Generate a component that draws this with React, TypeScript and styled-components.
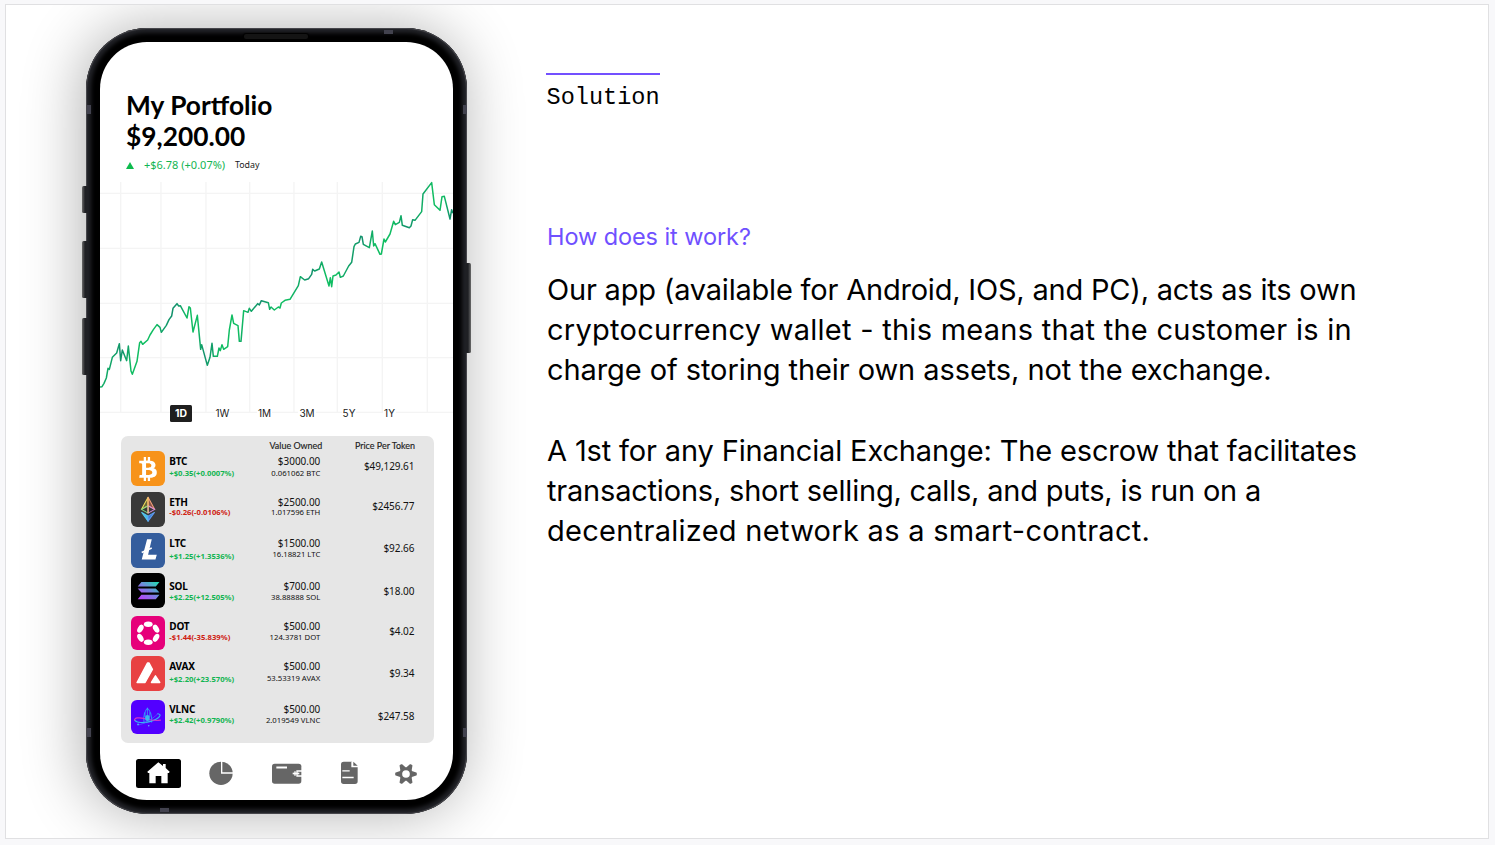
import React from 'react';
import styled, { createGlobalStyle } from 'styled-components';
import { FaBtc } from 'react-icons/fa';

const GlobalStyle = createGlobalStyle`
  *, *::before, *::after { box-sizing: border-box; }
  body { margin: 0; background: #f8f8fa; overflow: hidden; }
`;

const Page = styled.main`
  height: 845px;
  padding: 4px 6px 6px 5px;
`;

const Slide = styled.section`
  display: flex;
  align-items: flex-start;
  height: 835px;
  border: 1px solid #e0e0e2;
  background: #fff;
  overflow: hidden;
`;

/* ---------- phone ---------- */

const PhoneCase = styled.div`
  position: relative;
  flex: none;
  width: 381px;
  height: 786px;
  margin: 23px 0 0 80px;
  padding: 14px;
  border-radius: 61px;
  background: #000;
  box-shadow:
    inset 0 0 1px 1px #4b4b50,
    inset 0 0 4px 5px #222328,
    -4px 0 60px rgba(0, 0, 0, 0.31);
`;

const SideButton = styled.span<{ $side: 'left' | 'right'; $top: number; $length: number }>`
  position: absolute;
  ${(p) => p.$side}: ${(p) => (p.$side === 'left' ? -4.5 : -4)}px;
  top: ${(p) => p.$top}px;
  width: 6px;
  height: ${(p) => p.$length}px;
  border-radius: 1.5px;
  background: linear-gradient(to ${(p) => (p.$side === 'left' ? 'right' : 'left')}, #6b6b6b, #1f2024 50%);
`;

const Antenna = styled.span<{ $x: number; $y: number; $flat?: boolean }>`
  position: absolute;
  left: ${(p) => p.$x}px;
  top: ${(p) => p.$y}px;
  width: ${(p) => (p.$flat ? 9 : 4)}px;
  height: ${(p) => (p.$flat ? 4 : 9)}px;
  background: #42424e;
`;

const Speaker = styled.span`
  position: absolute;
  left: 158px;
  top: 6px;
  width: 64px;
  height: 5px;
  border-radius: 2px;
  background: #141414;
  box-shadow: 0 0 1px 1px #000;
`;

const Screen = styled.div`
  display: flex;
  flex-direction: column;
  width: 353px;
  height: 758px;
  padding-top: 47.5px;
  border-radius: 47px;
  background: #fff;
  overflow: hidden;
  font-family: 'Noto Sans', sans-serif;
`;

const Title = styled.h1`
  margin: 0;
  padding-left: 26px;
  font: 700 26.3px/31.4px Lato, sans-serif;
  color: #000;
`;

const ChangeRow = styled.div`
  display: flex;
  align-items: center;
  height: 12px;
  margin-top: 7px;
  padding-left: 26.3px;
`;

const UpArrow = styled.span`
  width: 0;
  height: 0;
  margin-top: 1px;
  border: 4px solid transparent;
  border-top: 0;
  border-bottom: 7px solid #0dbb4d;
`;

const ChangeText = styled.span`
  width: 91px;
  margin-left: 9.7px;
  font-size: 11px;
  line-height: 12px;
  white-space: nowrap;
  color: #12b552;
`;

const Today = styled.span`
  font-size: 8.82px;
  line-height: 12px;
  color: #1a1a1a;
`;

const ChartSvg = styled.svg`
  display: block;
  flex: none;
  width: 353px;
  height: 233px;
  margin-top: 8.7px;
`;

const Tabs = styled.div`
  position: relative;
  display: grid;
  flex: none;
  grid-template-columns: 42px 41px 43px 42px 42px 39px;
  justify-items: center;
  height: 17px;
  margin: -8px 0 0 60px;
`;

const Tab = styled.button<{ $active?: boolean }>`
  width: ${(p) => (p.$active ? '22px' : 'auto')};
  height: 17px;
  padding: 0 1px;
  border: 0;
  border-radius: 1.5px;
  background: ${(p) => (p.$active ? '#1f1f1f' : '#fff')};
  color: ${(p) => (p.$active ? '#fff' : '#222')};
  font: ${(p) => (p.$active ? '700 10.4px/17px' : '400 10px/17px')} Inter, sans-serif;
`;

/* ---------- token list ---------- */

const TokenCard = styled.div`
  flex: none;
  width: 313.2px;
  height: 307.7px;
  margin: 13.5px 0 0 21.3px;
  padding: 5.5px 20.2px 0 9.7px;
  border-radius: 7px;
  background: #e6e6e6;
`;

const TokenHeader = styled.div`
  display: flex;
  justify-content: flex-end;
  height: 10.4px;
  margin-right: -0.7px;
  font: 400 8.95px/10px Lato, sans-serif;
  color: #222;
  -webkit-text-stroke: 0.15px #222;
`;

const HeaderCell = styled.span`
  min-width: 92.7px;
  text-align: right;
`;

const TokenRow = styled.div<{ $height: number }>`
  display: grid;
  grid-template-columns: 34.5px 79.5px 75.3px 1fr;
  height: ${(p) => p.$height}px;
`;

const Badge = styled.div<{ $bg: string }>`
  display: flex;
  align-items: center;
  justify-content: center;
  height: 34.5px;
  border-radius: 6px;
  background: ${(p) => p.$bg};
  color: #fff;

  svg { display: block; }
`;

const Stack = styled.div<{ $top: number; $gap: number; $right?: boolean }>`
  display: flex;
  flex-direction: column;
  align-items: ${(p) => (p.$right ? 'flex-end' : 'flex-start')};
  gap: ${(p) => p.$gap}px;
  padding: ${(p) => p.$top}px 0 0 ${(p) => (p.$right ? 0 : 3.8)}px;
  white-space: nowrap;
`;

const Symbol = styled.span`
  font-size: 10px;
  font-weight: 700;
  line-height: 10px;
  letter-spacing: -0.2px;
  color: #000;
`;

const Delta = styled.span<{ $down?: boolean }>`
  font-size: 7.7px;
  font-weight: 700;
  line-height: 10px;
  color: ${(p) => (p.$down ? '#cf2213' : '#12b552')};
`;

const Amount = styled.span`
  font-size: 9.95px;
  line-height: 10px;
  color: #111;
`;

const Units = styled.span`
  font-size: 7.72px;
  line-height: 10px;
  color: #111;
`;

const Price = styled.span`
  font-size: 10px;
  line-height: 10px;
  letter-spacing: -0.08px;
  color: #111;
`;

/* ---------- bottom navigation ---------- */

const Nav = styled.nav`
  display: grid;
  flex: none;
  grid-template-columns: 73px 63px 69px 54px 22px;
  align-items: center;
  height: 29px;
  margin: 15.5px 0 0 36px;
`;

const HomeButton = styled.div`
  display: flex;
  align-items: center;
  justify-content: center;
  width: 44.7px;
  height: 29px;
  border-radius: 2.5px;
  background: #000;
`;

const NavIcon = styled.svg`
  display: block;
`;

/* ---------- copy ---------- */

const Copy = styled.div`
  display: flex;
  flex-direction: column;
  align-items: flex-start;
  margin-left: 79px;
  padding-top: 68.3px;
`;

const Eyebrow = styled.div`
  width: 114px;
  height: 39.1px;
  border-top: 2px solid #7350ff;
  padding: 9.1px 0 0 0.6px;
  font: 400 23.54px/28px 'Liberation Mono', monospace;
  white-space: nowrap;
  color: #000;
`;

const Question = styled.h2`
  margin: 109.5px 0 0 1px;
  font: 400 23.5px/30px Inter, sans-serif;
  letter-spacing: -0.08px;
  color: #6f50ff;
`;

const Paragraph = styled.p`
  margin: 18.4px 0 40.1px 1px;
  font: 400 29px/40.1px Inter, sans-serif;
  color: #000;

  & + & { margin-top: 0; }
`;

const Line = styled.span<{ $tracking: number }>`
  display: block;
  white-space: nowrap;
  letter-spacing: ${(p) => p.$tracking}px;
`;

/* ---------- token logos, all on a 103-unit square ---------- */

const Logo = ({ children }: { children: React.ReactNode }) => (
  <svg width="34.5" height="34.5" viewBox="0 0 103 103" fill="none">{children}</svg>
);

const EthLogo = () => (
  <Logo>
    <g strokeWidth="3" strokeLinejoin="round" strokeLinecap="round">
      <path d="M51 16 31 52 51 41Z" fill="#6b6438" stroke="#f3e05a" />
      <path d="M51 16 71 52 51 41Z" fill="#8a5548" stroke="#f7a27c" />
      <path d="M31 52 51 41V63Z" stroke="#7fd67e" />
      <path d="M71 52 51 41V63Z" stroke="#d38ae0" />
      <path d="M32 61 51 72V87Z" fill="#49b8e8" stroke="#56c8f0" />
      <path d="M70 61 51 72V87Z" fill="#3f7fd8" stroke="#5f9cf0" />
      <path d="M51 17V62" stroke="#f6c26a" />
    </g>
  </Logo>
);

const LtcLogo = () => (
  <Logo>
    <path d="M48 19H62L51 65H77L73 79H32Z" fill="#fff" />
    <path d="M32 58 62 45" stroke="#fff" strokeWidth="5" />
  </Logo>
);

const SolLogo = () => (
  <Logo>
    <defs>
      <linearGradient id="sol" gradientUnits="userSpaceOnUse" x1="28" y1="84" x2="76" y2="22">
        <stop offset="0" stopColor="#c13bff" />
        <stop offset="0.5" stopColor="#7a7fe0" />
        <stop offset="1" stopColor="#1fe0b0" />
      </linearGradient>
    </defs>
    <path fill="url(#sol)" d="M31 27H85L74 40H20ZM20 46H74L85 58.500H31ZM31 65H85L74 78H20Z" />
  </Logo>
);

const DotLogo = () => (
  <Logo>
    {[0, 60, 120, 180, 240, 300].map((a) => (
      <ellipse key={a} cx="51.500" cy="24.500" rx="13" ry="8" fill="#fff" transform={`rotate(${a} 51.5 51.500)`} />
    ))}
  </Logo>
);

const AvaxLogo = () => (
  <Logo>
    <g fill="#fff" stroke="#fff" strokeWidth="4" strokeLinejoin="round">
      <path d="M18 79 49 21H54L64 40 42 79Z" />
      <path d="M73 59 86 79H61Z" />
    </g>
  </Logo>
);

const VlncLogo = () => (
  <Logo>
    <g strokeLinecap="round">
      <path d="M39 68C35 48 42 31 49 25C57 31 64 48 61 66" stroke="#2f8dff" strokeWidth="3" />
      <path d="M49 24V44M42 38V50M56 38V50" stroke="#3fb4f5" strokeWidth="2" />
      <path d="M80 41C94 42 86 56 58 64C38 70 16 68 11 60" stroke="#35b6f2" strokeWidth="3.500" />
      <path d="M11 60C9 53 24 51 42 56C58 60 74 63 88 60" stroke="#d433c8" strokeWidth="3.500" />
      <path d="M24 74C36 72 62 60 80 41" stroke="#4a6dff" strokeWidth="2" />
      <ellipse cx="49" cy="54" rx="7" ry="9" fill="#39b9ee" />
      <circle cx="21" cy="73" r="2.500" fill="#4fd0f5" />
      <circle cx="53" cy="77" r="2" fill="#4fd0f5" />
    </g>
  </Logo>
);

type Token = {
  symbol: string;
  delta: string;
  amount: string;
  units: string;
  price: string;
  bg: string;
  logo: React.ReactNode;
  height: number;
  top: number;
  deltaGap: number;
  unitsGap: number;
  priceTop: number;
};

const tokens: Token[] = [
  { symbol: 'BTC', delta: '+$0.35(+0.0007%)', amount: '$3000.00', units: '0.061062 BTC', price: '$49,129.61', bg: '#f7931a', logo: <FaBtc size={24} />, height: 41, top: 4.9, deltaGap: 1.5, unitsGap: 1.5, priceTop: 9.4 },
  { symbol: 'ETH', delta: '-$0.26(-0.0106%)', amount: '$2500.00', units: '1.017596 ETH', price: '$2456.77', bg: '#393939', logo: <EthLogo />, height: 40.7, top: 4.7, deltaGap: 0.4, unitsGap: 0.4, priceTop: 8.7 },
  { symbol: 'LTC', delta: '+$1.25(+1.3536%)', amount: '$1500.00', units: '16.18821 LTC', price: '$92.66', bg: '#345d9d', logo: <LtcLogo />, height: 40.3, top: 4.9, deltaGap: 3, unitsGap: 1, priceTop: 9.7 },
  { symbol: 'SOL', delta: '+$2.25(+12.505%)', amount: '$700.00', units: '38.88888 SOL', price: '$18.00', bg: '#000', logo: <SolLogo />, height: 42.5, top: 7.6, deltaGap: 1.1, unitsGap: 1, priceTop: 12.3 },
  { symbol: 'DOT', delta: '-$1.44(-35.839%)', amount: '$500.00', units: '124.3781 DOT', price: '$4.02', bg: '#e6007a', logo: <DotLogo />, height: 40.5, top: 5.1, deltaGap: 1.2, unitsGap: 1.2, priceTop: 10.1 },
  { symbol: 'AVAX', delta: '+$2.20(+23.570%)', amount: '$500.00', units: '53.53319 AVAX', price: '$9.34', bg: '#e84142', logo: <AvaxLogo />, height: 43.5, top: 4.9, deltaGap: 2.7, unitsGap: 1.5, priceTop: 11.7 },
  { symbol: 'VLNC', delta: '+$2.42(+0.9790%)', amount: '$500.00', units: '2.019549 VLNC', price: '$247.58', bg: '#5200ff', logo: <VlncLogo />, height: 34.5, top: 4.4, deltaGap: 1.1, unitsGap: 1.1, priceTop: 10.8 },
];

/* ---------- price history ---------- */

const history =
  '0,621 6,620 12,610 19,594 24,565 28,568 37,532 50,519 58,491 62,542 67,510 80,542 85,498 93,573 97,583 111,544 119,488 123,484 128,493 143,480 150,465 160,449 171,434 180,442 184,457 199,436 207,419 215,408 219,385 231,371 236,378 241,377 261,414 267,380 271,384 279,456 292,406 302,508 305,494 322,556 330,532 336,490 340,529 352,529 357,504 361,512 366,494 371,508 383,500 388,450 396,405 401,430 414,437 418,484 423,484 431,392 444,397 448,385 454,394 473,371 478,375 484,362 505,368 509,388 513,381 523,390 535,381 540,384 544,369 555,361 570,358 595,317 601,290 614,300 626,296 635,283 638,268 644,273 658,267 665,246 687,318 691,293 695,320 699,288 708,285 717,276 721,292 730,288 746,258 755,247 762,200 766,192 777,187 782,169 786,170 790,193 808,203 817,153 821,198 825,191 840,223 844,222 852,177 856,186 870,162 881,124 886,134 898,127 903,107 907,136 928,143 933,138 938,119 945,121 965,95 969,42 995,8 1003,74 1020,91 1026,50 1033,49 1050,117 1055,89 1059,100';

const gridX = [62, 183, 318, 449, 582, 712, 847, 982];
const gridY = [40, 205, 370, 533, 697];

const Chart = () => (
  <ChartSvg viewBox="0 0 1059 699">
    <defs>
      <linearGradient id="trend" gradientUnits="userSpaceOnUse" x1="0" y1="0" x2="60" y2="15" spreadMethod="reflect">
        <stop offset="0.3" stopColor="#10bd62" />
        <stop offset="1" stopColor="#128f6c" />
      </linearGradient>
    </defs>
    <g stroke="#f4f4f4" strokeWidth="4">
      {gridX.map((x) => <path key={x} d={`M${x} 6V699`} />)}
      {gridY.map((y) => <path key={y} d={`M0 ${y}H1059`} />)}
    </g>
    <polyline points={history} fill="none" stroke="url(#trend)" strokeWidth="4.500" strokeLinejoin="round" />
  </ChartSvg>
);

const tabs = ['1D', '1W', '1M', '3M', '5Y', '1Y'];

/* Six tapered teeth round the hub, two outer and two inner corners each. */
const gearPoints = [0, 60, 120, 180, 240, 300]
  .flatMap((tooth) => [[-23, 18], [-4, 30], [4, 30], [23, 18]].map(([turn, r]) => {
    const a = ((tooth + turn) * Math.PI) / 180;
    return `${(33 + r * Math.cos(a)).toFixed(1)},${(33 + r * Math.sin(a)).toFixed(1)}`;
  }))
  .join(' ');

const BottomNav = () => (
  <Nav>
    <HomeButton>
      <NavIcon width="23" height="22" viewBox="0 0 69 66" fill="#fff">
        <path d="M34 1 48 12V6H56V18L68 29 66 33H62V64H43V42H26V64H7V33H3L1 29Z" />
      </NavIcon>
    </HomeButton>
    <NavIcon width="24" height="24" viewBox="0 0 72 72">
      <circle cx="36" cy="37" r="35" fill="#666" />
      <path d="M38 0V36H72" fill="none" stroke="#fff" strokeWidth="4" />
    </NavIcon>
    <NavIcon width="30" height="22" viewBox="0 0 90 66">
      <rect x="0" y="5" width="88" height="60" rx="8" fill="#666" />
      <path d="M13 16.500H45" stroke="#fff" strokeWidth="6" />
      <path d="M90 27H75V42H90" fill="none" stroke="#fff" strokeWidth="4" />
      <path d="M62 34.500H82" stroke="#fff" strokeWidth="5" />
      <path d="M69 28V41" stroke="#fff" strokeWidth="4" />
    </NavIcon>
    <NavIcon width="18" height="24" viewBox="0 0 54 72">
      <path d="M8 2H33V18H50V61Q50 69 42 69H8Q0 69 0 61V10Q0 2 8 2Z" fill="#666" />
      <path d="M37 2 50 14H37Z" fill="#666" />
      <path d="M33 2V17H51" fill="none" stroke="#fff" strokeWidth="4" />
      <path d="M4 29.500H26M4 49.500H38" stroke="#fff" strokeWidth="4" />
    </NavIcon>
    <NavIcon width="22" height="23" viewBox="0 -3 66 69">
      <polygon points={gearPoints} fill="#666" stroke="#666" strokeWidth="5" strokeLinejoin="round" />
      <circle cx="33" cy="33" r="11.500" fill="#fff" />
    </NavIcon>
  </Nav>
);

export default function App() {
  return (
    <Page>
      <GlobalStyle />
      <Slide>
        <PhoneCase>
          <SideButton $side="left" $top={158} $length={27} />
          <SideButton $side="left" $top={213} $length={57} />
          <SideButton $side="left" $top={290} $length={57} />
          <SideButton $side="right" $top={235} $length={90} />
          <Antenna $x={298} $y={1.5} $flat />
          <Antenna $x={74} $y={780} $flat />
          <Antenna $x={0.5} $y={77} />
          <Antenna $x={376.5} $y={77} />
          <Antenna $x={0.5} $y={700} />
          <Antenna $x={376.5} $y={700} />
          <Speaker />
          <Screen>
            <Title>My Portfolio<br />$9,200.00</Title>
            <ChangeRow>
              <UpArrow />
              <ChangeText>+$6.78 (+0.07%)</ChangeText>
              <Today>Today</Today>
            </ChangeRow>
            <Chart />
            <Tabs>
              {tabs.map((t, i) => <Tab key={t} $active={i === 0}>{t}</Tab>)}
            </Tabs>
            <TokenCard>
              <TokenHeader>
                <HeaderCell>Value Owned</HeaderCell>
                <HeaderCell>Price Per Token</HeaderCell>
              </TokenHeader>
              {tokens.map((t) => (
                <TokenRow key={t.symbol} $height={t.height}>
                  <Badge $bg={t.bg}>{t.logo}</Badge>
                  <Stack $top={t.top} $gap={t.deltaGap}>
                    <Symbol>{t.symbol}</Symbol>
                    <Delta $down={t.delta.startsWith('-')}>{t.delta}</Delta>
                  </Stack>
                  <Stack $top={t.top} $gap={t.unitsGap} $right>
                    <Amount>{t.amount}</Amount>
                    <Units>{t.units}</Units>
                  </Stack>
                  <Stack $top={t.priceTop} $gap={0} $right>
                    <Price>{t.price}</Price>
                  </Stack>
                </TokenRow>
              ))}
            </TokenCard>
            <BottomNav />
          </Screen>
        </PhoneCase>
        <Copy>
          <Eyebrow>Solution</Eyebrow>
          <Question>How does it work?</Question>
          <Paragraph>
            <Line $tracking={-0.2}>Our app (available for Android, IOS, and PC), acts as its own</Line>
            <Line $tracking={0.27}>cryptocurrency wallet - this means that the customer is in</Line>
            <Line $tracking={-0.08}>charge of storing their own assets, not the exchange.</Line>
          </Paragraph>
          <Paragraph>
            <Line $tracking={-0.14}>A 1st for any Financial Exchange: The escrow that facilitates</Line>
            <Line $tracking={-0.2}>transactions, short selling, calls, and puts, is run on a</Line>
            <Line $tracking={0.28}>decentralized network as a smart-contract.</Line>
          </Paragraph>
        </Copy>
      </Slide>
    </Page>
  );
}
